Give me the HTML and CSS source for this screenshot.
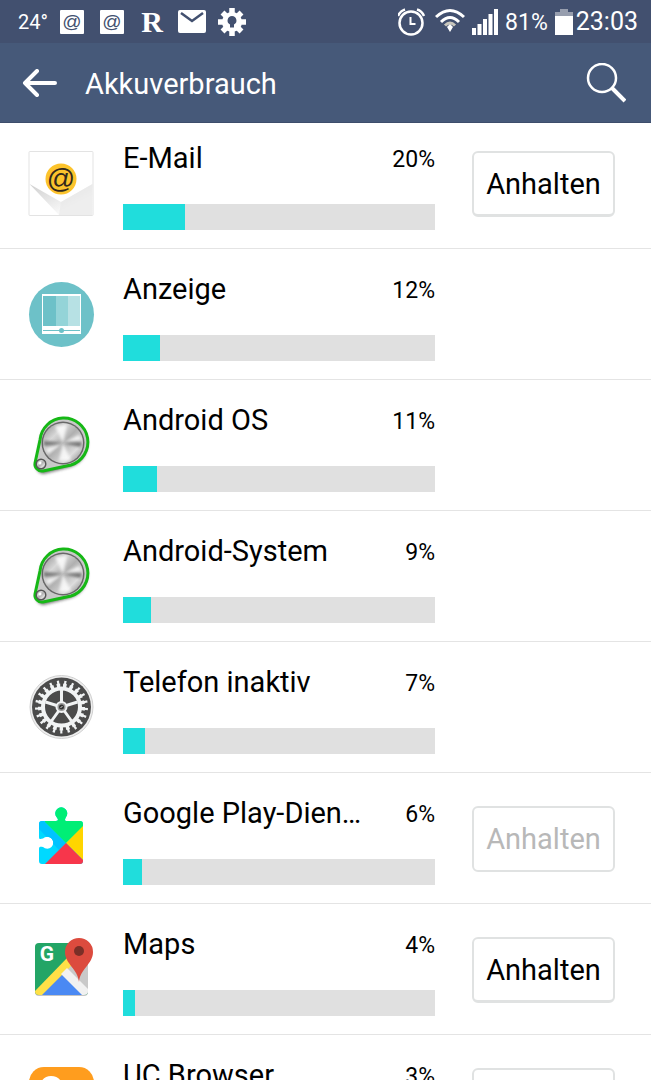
FILE: index.html
```
<!DOCTYPE html>
<html lang="de">
<head>
    <meta charset="UTF-8">
    <meta name="viewport" content="width=device-width, initial-scale=1.0">
    <title>Akkuverbrauch</title>
    <link rel="stylesheet" href="styles.css">
</head>
<body>
    <!-- shared icons -->
    <svg class="defs" width="0" height="0" aria-hidden="true">
        <defs>
            <linearGradient id="steel" x1="0" y1="0" x2="1" y2="1">
                <stop offset="0" stop-color="#8a8a8a"/>
                <stop offset="0.3" stop-color="#d8d8d8"/>
                <stop offset="0.5" stop-color="#b0b0b0"/>
                <stop offset="0.75" stop-color="#ddd"/>
                <stop offset="1" stop-color="#777"/>
            </linearGradient>
            <linearGradient id="fold" x1="0" y1="0" x2="1" y2="1">
                <stop offset="0" stop-color="#cfcfcf"/>
                <stop offset="0.7" stop-color="#f8f8f8"/>
            </linearGradient>
            <filter id="soft" x="-20%" y="-20%" width="140%" height="140%">
                <feGaussianBlur stdDeviation="1.5"/>
            </filter>
            <clipPath id="map-clip"><rect x="7" y="6" width="53" height="52" rx="4"/></clipPath>
            <clipPath id="play-clip"><path d="M14 15H28C31 15 30 13 28.500 11A6 6 0 1 1 38 11C37 13 36 15 39 15H52A3 3 0 0 1 55 18V55A3 3 0 0 1 52 58H14A3 3 0 0 1 11 55V43C11 40 13 41 15 41A6 6 0 1 0 15 32.500C13 33 11 34 11 31V18A3 3 0 0 1 14 15Z"/></clipPath>
        </defs>
        <symbol id="android" viewBox="0 0 66 66">
            <path d="M8 53L12 27A24 24 0 1 1 43 54L16 61A8 8 0 0 1 8 53Z" fill="#444" opacity="0.7" filter="url(#soft)"/>
            <path d="M7 50L12 27A24 24 0 1 1 43 52L15 58A7 7 0 0 1 7 50Z" fill="#c9c9c9" stroke="#16b816" stroke-width="3"/>
            <circle cx="35" cy="30" r="21.500" fill="#666"/>
            <circle cx="35" cy="30" r="20" fill="url(#steel)"/>
            <g fill="#fff" opacity="0.8" filter="url(#soft)">
                <path d="M35 30L27 13L39 12ZM35 30L31 48L43 47ZM35 30L18 36L20 41ZM35 30L51 22L53 27Z"/>
            </g>
            <g fill="#444" opacity="0.7" filter="url(#soft)">
                <path d="M35 30L16 28L16 33ZM35 30L54 29L53 34Z"/>
            </g>
            <circle cx="13" cy="51" r="5.500" fill="#555"/>
            <circle cx="13" cy="51" r="4" fill="url(#steel)"/>
            <circle cx="12" cy="50" r="1.500" fill="#fff"/>
        </symbol>
    </svg>

    <div class="status-bar">
        <div class="status-left">
            <span class="temp">24°</span>
            <svg class="note" viewBox="0 0 28 28" aria-hidden="true">
                <rect x="2" y="2" width="24" height="24" rx="1" fill="#fff"/>
                <text class="at" x="14" y="20" font-size="19" text-anchor="middle" fill="#42506f">@</text>
            </svg>
            <svg class="note" viewBox="0 0 28 28" aria-hidden="true">
                <rect x="2" y="2" width="24" height="24" rx="1" fill="#fff"/>
                <text class="at" x="14" y="20" font-size="19" text-anchor="middle" fill="#42506f">@</text>
            </svg>
            <span class="note letter">R</span>
            <svg class="note" viewBox="0 0 28 28" aria-hidden="true">
                <rect x="0" y="2" width="28" height="23" rx="2" fill="#fff"/>
                <path d="M3 5L14 13L25 5" fill="none" stroke="#42506f" stroke-width="2.500"/>
            </svg>
            <svg class="note" viewBox="0 0 28 28" aria-hidden="true">
                <circle cx="14" cy="14" r="10" fill="#fff"/>
                <g stroke="#fff" stroke-width="5.500">
                    <path d="M14 0V28M0 14H28M4.500 4.500L23.500 23.500M23.500 4.500L4.500 23.500"/>
                </g>
                <path d="M14 8A4.500 4.500 0 0 1 16 16.500V19.500H12V16.500A4.500 4.500 0 0 1 14 8Z" fill="#42506f"/>
            </svg>
        </div>
        <div class="status-right">
            <svg width="30" height="30" viewBox="0 0 30 30" fill="none" stroke="#fff" aria-hidden="true">
                <circle cx="13" cy="16" r="11.500" stroke-width="2.500"/>
                <path d="M12.500 10V17H17.500" stroke-width="2"/>
                <path d="M0 9Q2 4 7 2.500M26 9Q24 4 19 2.500" stroke-width="2.500"/>
            </svg>
            <svg width="30" height="30" viewBox="0 0 30 30" fill="none" stroke="#fff" aria-hidden="true">
                <path d="M1 10Q15 -3 29 10" stroke-width="3"/>
                <path d="M6 15Q15 6 24 15" stroke-width="3"/>
                <path d="M10 18.500Q15 13.500 20 18.500" stroke="#c9c7bd" stroke-width="3"/>
                <path d="M12 20L15 17L18 20L15 25Z" fill="#fff" stroke="none"/>
            </svg>
            <svg width="26" height="30" viewBox="0 0 26 30" fill="#fff" aria-hidden="true">
                <path d="M0 21H4V28H0ZM5.500 17H9.500V28H5.500ZM11 12H15V28H11ZM16.500 7H20.500V28H16.500ZM22 2H26V28H22Z"/>
            </svg>
            <span class="level">81%</span>
            <span class="clock">
                <svg width="18" height="30" viewBox="0 0 18 30" aria-hidden="true">
                    <path d="M5 2H13V5H18V10H0V5H5Z" fill="#979eae"/>
                    <path d="M0 9H18V28H0Z" fill="#fff"/>
                </svg>
                23:03
            </span>
        </div>
    </div>

    <header class="app-bar">
        <button class="icon-btn" type="button" aria-label="Zurück">
            <svg width="36" height="28" viewBox="0 0 36 28" fill="none" stroke="#fff" stroke-width="4" stroke-linecap="round" stroke-linejoin="round">
                <path d="M33 14H3M15 2L3 14L15 26"/>
            </svg>
        </button>
        <h1>Akkuverbrauch</h1>
        <button class="icon-btn" type="button" aria-label="Suchen">
            <svg width="40" height="40" viewBox="0 0 40 40" fill="none" stroke="#fff">
                <circle cx="16" cy="15" r="14" stroke-width="2.500"/>
                <path d="M26 25L39 38" stroke-width="4"/>
            </svg>
        </button>
    </header>

    <main>
        <ul class="usage-list">
            <li class="row">
                <svg class="app-icon" viewBox="0 0 66 66" aria-hidden="true">
                    <rect x="1" y="0.500" width="64" height="64" rx="1" fill="#fff" stroke="#e3e3e3"/>
                    <path d="M1.500 33L33 51L64.500 33V64H31Z" fill="url(#fold)"/>
                    <path d="M33 51L64.500 33V64H31Z" fill="#e8e8e8" opacity="0.6"/>
                    <circle cx="33" cy="28" r="15.500" fill="#fcc32c"/>
                    <text class="at" x="33" y="37" font-size="28" text-anchor="middle" fill="#33281c">@</text>
                </svg>
                <div class="info">
                    <h2>E-Mail</h2>
                    <span class="percent">20%</span>
                    <div class="bar"><div class="fill" style="width: 20%"></div></div>
                </div>
                <div class="action"><button type="button">Anhalten</button></div>
            </li>
            <li class="row">
                <svg class="app-icon" viewBox="0 0 66 66" aria-hidden="true">
                    <circle cx="33.500" cy="32.500" r="32.500" fill="#6dc1c8"/>
                    <rect x="14" y="12" width="39" height="40" fill="#fff"/>
                    <rect x="15" y="14" width="13" height="30" fill="#6dc1c8"/>
                    <rect x="28" y="14" width="12" height="30" fill="#94d4d8"/>
                    <rect x="40" y="14" width="12" height="30" fill="#b7e1e4"/>
                    <rect x="15" y="48" width="37" height="1" fill="#6dc1c8"/>
                    <circle cx="33.500" cy="48.500" r="2.500" fill="#6dc1c8"/>
                </svg>
                <div class="info">
                    <h2>Anzeige</h2>
                    <span class="percent">12%</span>
                    <div class="bar"><div class="fill" style="width: 12%"></div></div>
                </div>
                <div class="action"></div>
            </li>
            <li class="row">
                <svg class="app-icon" aria-hidden="true"><use href="#android"/></svg>
                <div class="info">
                    <h2>Android OS</h2>
                    <span class="percent">11%</span>
                    <div class="bar"><div class="fill" style="width: 11%"></div></div>
                </div>
                <div class="action"></div>
            </li>
            <li class="row">
                <svg class="app-icon" aria-hidden="true"><use href="#android"/></svg>
                <div class="info">
                    <h2>Android-System</h2>
                    <span class="percent">9%</span>
                    <div class="bar"><div class="fill" style="width: 9%"></div></div>
                </div>
                <div class="action"></div>
            </li>
            <li class="row">
                <svg class="app-icon" viewBox="0 0 66 66" aria-hidden="true">
                    <circle cx="33.500" cy="32" r="31.500" fill="#eee" stroke="#d0d0d0"/>
                    <circle cx="33.500" cy="32" r="29.500" fill="#4b4b4b"/>
                    <g fill="none" stroke="#f1f3f4">
                        <circle cx="33.500" cy="32" r="18.500" stroke-width="4"/>
                        <circle cx="33.500" cy="32" r="21.500" stroke-width="4" pathLength="84" stroke-dasharray="2.200 1.800"/>
                        <circle cx="33.500" cy="32" r="24.500" stroke-width="4" pathLength="84" stroke-dasharray="1.200 2.800" stroke-dashoffset="-0.500"/>
                        <path d="M33.500 32V15M33.500 32L49.500 27M33.500 32L43.500 46M33.500 32L23.500 46M33.500 32L17.500 27" stroke-width="3"/>
                    </g>
                    <circle cx="33.500" cy="32" r="6" fill="#f1f3f4"/>
                    <circle cx="33.500" cy="32" r="4" fill="#999"/>
                    <circle cx="33.500" cy="32" r="2.500" fill="#333"/>
                    <path d="M32.500 33L34.500 31" stroke="#ccc"/>
                </svg>
                <div class="info">
                    <h2>Telefon inaktiv</h2>
                    <span class="percent">7%</span>
                    <div class="bar"><div class="fill" style="width: 7%"></div></div>
                </div>
                <div class="action"></div>
            </li>
            <li class="row">
                <svg class="app-icon" viewBox="0 0 66 66" aria-hidden="true">
                    <g clip-path="url(#play-clip)">
                        <rect width="66" height="66" fill="#00d9ff"/>
                        <path d="M10 9L38 37L31 44L10 22Z" fill="#00c3ff"/>
                        <path d="M17 16V0H56V20L38 37Z" fill="#00ee76"/>
                        <path d="M56 19V55L38 37Z" fill="#ffd500"/>
                        <path d="M15 60L38 37L61 60Z" fill="#f7364b"/>
                    </g>
                </svg>
                <div class="info">
                    <h2>Google Play-Dien…</h2>
                    <span class="percent">6%</span>
                    <div class="bar"><div class="fill" style="width: 6%"></div></div>
                </div>
                <div class="action"><button type="button" disabled>Anhalten</button></div>
            </li>
            <li class="row">
                <svg class="app-icon" viewBox="0 0 66 66" aria-hidden="true">
                    <rect x="7" y="7" width="53" height="52" rx="4" fill="#c4c4c4"/>
                    <g clip-path="url(#map-clip)">
                        <rect x="7" y="6" width="53" height="52" fill="#23a566"/>
                        <path d="M36 34L60 10V59Z" fill="#c9c9c9"/>
                        <path d="M34 36L57 60H11Z" fill="#4a89f3"/>
                        <path d="M5 56L40 20L46 26L12 60Z" fill="#ffe047"/>
                        <path d="M39 31L62 54L56 60L33 37Z" fill="#f1f1f1"/>
                    </g>
                    <text class="logo-g" x="19" y="24" font-size="21" text-anchor="middle" fill="#fff">G</text>
                    <path d="M51 45C50 32 37 27 37 15A14 14 0 0 1 65 15C65 27 52 32 51 45Z" fill="#dc4b3e"/>
                    <circle cx="51" cy="14" r="5" fill="#7a2f27"/>
                </svg>
                <div class="info">
                    <h2>Maps</h2>
                    <span class="percent">4%</span>
                    <div class="bar"><div class="fill" style="width: 4%"></div></div>
                </div>
                <div class="action"><button type="button">Anhalten</button></div>
            </li>
            <li class="row">
                <svg class="app-icon" viewBox="0 0 66 66" aria-hidden="true">
                    <rect x="1" y="-1" width="65" height="65" rx="15" fill="#ff9d1e"/>
                    <path d="M12 20C12 12 17 8 23 8C30 8 34 12 35 20C36 28 54 26 54 40C54 50 46 55 36 55C24 55 12 48 12 20Z" fill="#fff"/>
                </svg>
                <div class="info">
                    <h2>UC Browser</h2>
                    <span class="percent">3%</span>
                    <div class="bar"><div class="fill" style="width: 3%"></div></div>
                </div>
                <div class="action"><button type="button" disabled>Anhalten</button></div>
            </li>
        </ul>
    </main>
</body>
</html>
```
FILE: styles.css
```
* {
    box-sizing: border-box;
}

body {
    margin: 0;
    height: 100vh;
    display: flex;
    flex-direction: column;
    overflow: hidden;
    background-color: #fff;
    color: #000;
    font-family: Roboto, "Liberation Sans", sans-serif;
}

h1, h2 {
    margin: 0;
    font-weight: 400;
}

svg {
    display: block;
    flex: none;
}

.defs {
    position: absolute;
}

.at {
    font-family: "Liberation Sans", sans-serif;
}

.logo-g {
    font-family: Roboto, sans-serif;
    font-weight: 700;
}

/* status bar */
.status-bar {
    flex: none;
    display: flex;
    justify-content: space-between;
    align-items: center;
    height: 43px;
    padding: 0 13px 0 18px;
    background-color: #42506f;
    color: #fff;
}

.status-left {
    display: flex;
    align-items: center;
    gap: 12px;
}

.temp {
    width: 28px;
    font-size: 20px;
}

.note {
    width: 28px;
    height: 28px;
    overflow: visible;
}

.letter {
    font-family: "Liberation Serif", serif;
    font-size: 30px;
    font-weight: 700;
    line-height: 28px;
    text-align: center;
}

.status-right {
    display: flex;
    align-items: center;
    gap: 7px;
}

.level {
    padding-top: 2px;
    font-size: 23px;
    line-height: 30px;
}

.clock {
    display: flex;
    align-items: center;
    gap: 3px;
    font-size: 25px;
    line-height: 34px;
}

/* title bar */
.app-bar {
    flex: none;
    display: flex;
    align-items: center;
    height: 80px;
    padding: 0 25px 0 22px;
    background-color: #465979;
    border-bottom: 1px solid #3d4d6b;
    color: #fff;
}

.app-bar h1 {
    flex: 1;
    margin-left: 27px;
    padding-top: 3px;
    font-size: 29px;
    line-height: 40px;
}

.icon-btn {
    padding: 0;
    border: none;
    background: none;
}

/* usage list, slightly scrolled under the title bar */
main {
    flex: 1;
    min-height: 0;
    overflow: hidden;
}

.usage-list {
    list-style: none;
    margin: -5px 0 0;
    padding: 0;
}

.row {
    display: flex;
    align-items: center;
    padding: 20px 36px 18px 28px;
    border-bottom: 1px solid #e4e4e4;
}

.app-icon {
    width: 66px;
    height: 66px;
    overflow: visible;
}

.info {
    flex: 1;
    min-width: 0;
    display: grid;
    grid-template-columns: 1fr auto;
    column-gap: 30px;
    row-gap: 26px;
    margin: 0 37px 0 29px;
}

.info h2 {
    overflow: hidden;
    white-space: nowrap;
    text-overflow: ellipsis;
    font-size: 29px;
    line-height: 40px;
}

.percent {
    height: 40px;
    font-size: 23px;
    line-height: 44px;
}

.bar {
    grid-column: 1 / 3;
    height: 26px;
    background-color: #e0e0e0;
}

.fill {
    height: 100%;
    background-color: #20dddc;
}

.action {
    flex: none;
    width: 143px;
}

.action button {
    display: block;
    width: 100%;
    height: 66px;
    padding: 0;
    border: 2px solid #e0e2e2;
    border-bottom-width: 3px;
    border-radius: 6px;
    background-color: #fff;
    color: #000;
    font-family: inherit;
    font-size: 29px;
}

.action button:disabled {
    border-bottom-width: 2px;
    color: #b8b8b8;
}
```
